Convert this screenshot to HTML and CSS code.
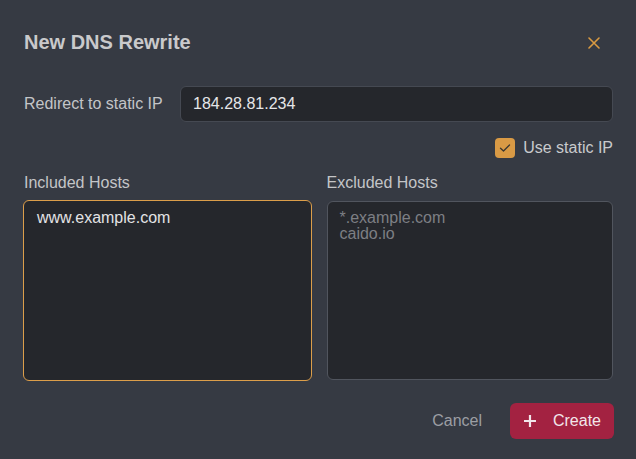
FILE: index.html
```html
<!DOCTYPE html>
<html lang="en">
<head>
<meta charset="utf-8">
<title>New DNS Rewrite</title>
<link rel="stylesheet" href="styles.css">
</head>
<body>
<div class="dialog">
  <header class="dialog-header">
    <h1 class="dialog-title">New DNS Rewrite</h1>
    <button class="close-btn" aria-label="Close">
      <svg width="12" height="12" viewBox="0 0 12 12"><path d="M1 1L11 11M11 1L1 11" stroke="#d99a42" stroke-width="1.6" stroke-linecap="round"/></svg>
    </button>
  </header>
  <div class="field-row">
    <label class="field-label">Redirect to static IP</label>
    <div class="text-input">184.28.81.234</div>
  </div>
  <div class="check-row">
    <span class="checkbox">
      <svg width="12" height="10" viewBox="0 0 12 10"><path d="M1.5 5.2L4.5 8L10.5 2" fill="none" stroke="#3a3630" stroke-width="1.3" stroke-linecap="round" stroke-linejoin="round"/></svg>
    </span>
    <span class="check-label">Use static IP</span>
  </div>
  <div class="hosts">
    <div class="host-col">
      <div class="host-label">Included Hosts</div>
      <div class="textarea focused"><div class="value">www.example.com</div></div>
    </div>
    <div class="host-col">
      <div class="host-label">Excluded Hosts</div>
      <div class="textarea"><div class="placeholder">*.example.com<br>caido.io</div></div>
    </div>
  </div>
  <footer class="dialog-footer">
    <button class="btn-cancel">Cancel</button>
    <button class="btn-create">
      <svg width="14" height="14" viewBox="0 0 14 14"><path d="M7 1V13M1 7H13" stroke="#f2e6ea" stroke-width="2.2"/></svg>
      <span>Create</span>
    </button>
  </footer>
</div>
</body>
</html>
```
FILE: styles.css
```css
html, body {
  margin: 0;
  padding: 0;
}
body {
  background: #363a43;
  font-family: "Liberation Sans", Arial, sans-serif;
  width: 636px;
  height: 459px;
  overflow: hidden;
}
.dialog {
  box-sizing: border-box;
  width: 636px;
  height: 459px;
  padding: 30px 23px 20px 24px;
  display: flex;
  flex-direction: column;
}
.dialog-header {
  display: flex;
  align-items: center;
  justify-content: space-between;
  height: 24px;
}
.dialog-title {
  margin: 0;
  font-size: 20px;
  line-height: 24px;
  font-weight: bold;
  color: #c9c9cb;
}
.close-btn {
  background: none;
  border: 0;
  padding: 0;
  margin-right: 13px;
  margin-top: 1px;
  width: 12px;
  height: 12px;
  display: flex;
}
.field-row {
  margin-top: 32px;
  display: flex;
  align-items: center;
}
.field-label {
  width: 156px;
  flex: none;
  font-size: 16px;
  color: #c4c5c8;
}
.text-input {
  flex: 1;
  box-sizing: border-box;
  height: 36px;
  background: #25272c;
  border: 1px solid #454952;
  border-radius: 6px;
  padding: 0 12px;
  font-size: 16px;
  line-height: 34px;
  color: #e6e6e8;
}
.check-row {
  margin-top: 16px;
  display: flex;
  justify-content: flex-end;
  align-items: center;
  gap: 8px;
}
.checkbox {
  width: 20px;
  height: 20px;
  border-radius: 4px;
  background: #d99a45;
  display: flex;
  align-items: center;
  justify-content: center;
}
.check-label {
  font-size: 16px;
  color: #c9cacd;
  margin-right: 0;
}
.hosts {
  margin-top: 16px;
  display: flex;
  gap: 16px;
}
.host-col {
  flex: 1;
  display: flex;
  flex-direction: column;
}
.host-label {
  font-size: 16px;
  line-height: 18px;
  color: #c4c5c8;
  margin-bottom: 9px;
}
.textarea {
  box-sizing: border-box;
  height: 179px;
  background: #25272c;
  border: 1px solid #51555e;
  border-radius: 6px;
  padding: 8px 12px;
  font-size: 16px;
  line-height: 16px;
}
.textarea.focused {
  border-color: #dc9e4a;
  margin-left: -1px;
  margin-top: -1px;
  height: 181px;
  width: calc(100% + 2px);
  padding: 9px 13px;
}
.value {
  color: #e3e3e5;
}
.placeholder {
  color: #7d7f84;
}
.dialog-footer {
  margin-top: auto;
  display: flex;
  justify-content: flex-end;
  align-items: center;
  gap: 28px;
  margin-right: -1px;
}
.btn-cancel {
  background: none;
  border: 0;
  padding: 0;
  font-family: inherit;
  font-size: 16px;
  color: #9c9ea3;
}
.btn-create {
  box-sizing: border-box;
  height: 36px;
  width: 104px;
  border: 0;
  border-radius: 6px;
  background: #a32241;
  color: #f2e6ea;
  font-family: inherit;
  font-size: 16px;
  display: flex;
  align-items: center;
  padding: 0 13px;
  gap: 16px;
}
```
